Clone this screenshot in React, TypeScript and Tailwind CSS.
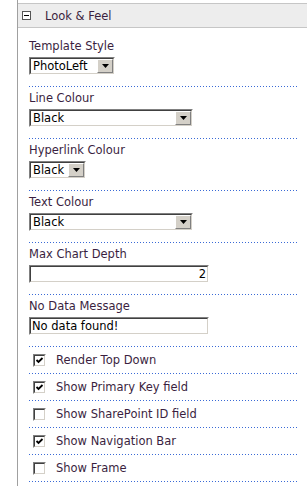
import React from 'react';

const Dotted = () => (
  <div className="h-px bg-[linear-gradient(to_right,#3a6ad6_1px,transparent_1px)] bg-[length:3px_1px]" />
);

const Inset: React.FC<{ className?: string; children?: React.ReactNode }> = ({ className = '', children }) => (
  <div className={`flex border border-t-[#808080] border-l-[#808080] border-b-white border-r-white ${className}`}>
    <div className="flex min-w-0 flex-1 border border-t-[#404040] border-l-[#404040] border-b-[#d4d0c8] border-r-[#d4d0c8] bg-white">
      {children}
    </div>
  </div>
);

const Select: React.FC<{ value: string; width: string }> = ({ value, width }) => (
  <Inset className={`h-[18px] ${width}`}>
    <span className="flex-1 truncate pl-[2px] leading-[14px] text-black">{value}</span>
    <div className="flex h-[14px] w-[16px] shrink-0 items-center justify-center border border-t-white border-l-white border-b-[#808080] border-r-[#808080] bg-[#d4d0c8]">
      <svg width="7" height="4" viewBox="0 0 7 4">
        <polygon points="0,0 7,0 3.5,4" fill="#000" />
      </svg>
    </div>
  </Inset>
);

const TextBox: React.FC<{ value: string; right?: boolean }> = ({ value, right }) => (
  <Inset className="h-[18px] w-[180px]">
    <span className={`flex-1 px-[1px] leading-[14px] text-black ${right ? 'text-right' : ''}`}>{value}</span>
  </Inset>
);

const Field: React.FC<{ label: string; first?: boolean; children: React.ReactNode }> = ({ label, first, children }) => (
  <>
    <div className={first ? 'pt-[11px] pb-[11px]' : 'pt-[4px] pb-[11px]'}>
      <div className="h-[14px] leading-[14px]">{label}</div>
      <div className="mt-[4px]">{children}</div>
    </div>
    <Dotted />
  </>
);

const CheckRow: React.FC<{ label: string; checked?: boolean }> = ({ label, checked }) => (
  <>
    <div className="flex h-[26px] items-center gap-[10px] pl-[4px]">
      <div className="h-[13px] w-[13px] border border-t-[#808080] border-l-[#808080] border-b-white border-r-white">
        <div className="h-[11px] w-[11px] border border-t-[#404040] border-l-[#404040] border-b-[#d4d0c8] border-r-[#d4d0c8] bg-white">
          {checked && (
            <svg width="9" height="9" viewBox="0 0 9 9" className="block">
              <path d="M1.5 4 L3.5 6 L7.5 2" stroke="#000" strokeWidth="1.8" fill="none" />
            </svg>
          )}
        </div>
      </div>
      <span className="leading-[14px]">{label}</span>
    </div>
    <Dotted />
  </>
);

export default function App() {
  return (
    <div className="flex h-[486px] w-[307px] overflow-hidden bg-white font-['DejaVu_Sans',Verdana,sans-serif] text-[11.5px] text-[#3b1f3f]">
      <div className="w-[17px] shrink-0" />
      <div className="w-px shrink-0 bg-[#a0a0a0]" />
      <div className="min-w-0 flex-1">
        {/* Section header */}
        <div className="mt-[3px] flex h-[25px] items-center border-y border-[#c6c6c6] bg-[#ededed] pl-[4px]">
          <div className="flex h-[9px] w-[9px] items-center justify-center border border-[#555] bg-white">
            <div className="h-px w-[5px] bg-black" />
          </div>
          <span className="ml-[14px] leading-[14px]">Look &amp; Feel</span>
        </div>

        <div className="pl-[11px] pr-[10px]">
          <Field label="Template Style" first>
            <Select value="PhotoLeft" width="w-[86px]" />
          </Field>
          <Field label="Line Colour">
            <Select value="Black" width="w-[164px]" />
          </Field>
          <Field label="Hyperlink Colour">
            <Select value="Black" width="w-[57px]" />
          </Field>
          <Field label="Text Colour">
            <Select value="Black" width="w-[164px]" />
          </Field>
          <Field label="Max Chart Depth">
            <TextBox value="2" right />
          </Field>
          <Field label="No Data Message">
            <TextBox value="No data found!" />
          </Field>
          <CheckRow label="Render Top Down" checked />
          <CheckRow label="Show Primary Key field" checked />
          <CheckRow label="Show SharePoint ID field" />
          <CheckRow label="Show Navigation Bar" checked />
          <CheckRow label="Show Frame" />
        </div>
      </div>
    </div>
  );
}
